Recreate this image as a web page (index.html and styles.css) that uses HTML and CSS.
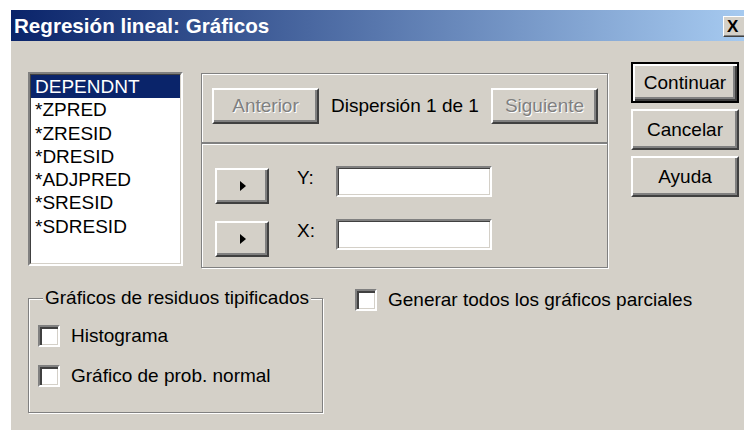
FILE: index.html
```html
<!DOCTYPE html>
<html lang="es">
<head>
<meta charset="utf-8">
<title>Regresión lineal: Gráficos</title>
<link rel="stylesheet" href="styles.css">
</head>
<body>
<div class="window">
  <div class="titlebar">
    <span class="title">Regresión lineal: Gráficos</span>
    <button class="close" type="button">X</button>
  </div>
  <div class="client">
    <div class="top-row">
      <div class="listbox">
        <div class="listbox-inner">
          <div class="item selected">DEPENDNT</div>
          <div class="item">*ZPRED</div>
          <div class="item">*ZRESID</div>
          <div class="item">*DRESID</div>
          <div class="item">*ADJPRED</div>
          <div class="item">*SRESID</div>
          <div class="item">*SDRESID</div>
        </div>
      </div>

      <div class="panel">
        <div class="panel-nav etched">
          <button class="btn nav-btn" type="button" disabled>Anterior</button>
          <span class="nav-status">Dispersión 1 de 1</span>
          <button class="btn nav-btn nav-next" type="button" disabled>Siguiente</button>
        </div>
        <div class="panel-vars etched">
          <div class="var-row">
            <button class="btn arrow" type="button"><span class="tri"></span></button>
            <span class="var-label">Y:</span>
            <div class="field"></div>
          </div>
          <div class="var-row">
            <button class="btn arrow" type="button"><span class="tri"></span></button>
            <span class="var-label">X:</span>
            <div class="field"></div>
          </div>
        </div>
      </div>

      <div class="actions">
        <button class="btn action default" type="button">Continuar</button>
        <button class="btn action" type="button">Cancelar</button>
        <button class="btn action" type="button">Ayuda</button>
      </div>
    </div>

    <div class="bottom-row">
      <div class="group etched">
        <span class="group-title">Gráficos de residuos tipificados</span>
        <div class="check-row first">
          <span class="checkbox"></span>
          <span class="check-label">Histograma</span>
        </div>
        <div class="check-row">
          <span class="checkbox"></span>
          <span class="check-label">Gráfico de prob. normal</span>
        </div>
      </div>
      <div class="check-row partial">
        <span class="checkbox"></span>
        <span class="check-label">Generar todos los gráficos parciales</span>
      </div>
    </div>
  </div>
</div>
</body>
</html>
```

FILE: styles.css
```css
html, body {
  margin: 0;
  padding: 0;
  overflow: hidden;
  background: #ffffff;
}

body {
  font-family: "Liberation Sans", Arial, sans-serif;
  font-size: 19px;
  color: #000;
}

.window {
  margin: 10px 0 0 11px;
  width: 733px;
  height: 420px;
  display: flex;
  flex-direction: column;
}

/* caption bar */
.titlebar {
  height: 31px;
  flex: none;
  display: flex;
  align-items: flex-start;
  background: linear-gradient(to right, #0a246a 0%, #a6caf0 100%);
}

.title {
  padding-left: 3px;
  line-height: 32px;
  font-weight: bold;
  font-size: 20.6px;
  color: #fff;
  white-space: nowrap;
}

.close {
  margin: 6px -3px 0 auto;
  width: 24px;
  height: 21px;
  box-sizing: border-box;
  padding: 0 0 0 3px;
  text-align: left;
  border: 1px solid;
  border-color: #fff #404040 #404040 #fff;
  box-shadow: inset -1px -1px #808080;
  background: #d4d0c8;
  font: bold 17px/17px "Liberation Sans", Arial, sans-serif;
  color: #000;
}

/* dialog body */
.client {
  flex: 1;
  background: #d4d0c8;
  display: flex;
  flex-direction: column;
}

.top-row {
  display: flex;
  align-items: flex-start;
  padding: 21px 0 0 17px;
}

/* classic raised button */
.btn {
  box-sizing: border-box;
  margin: 0;
  padding: 0;
  border: 2px solid;
  border-color: #fff #404040 #404040 #fff;
  box-shadow: inset -2px -2px #808080;
  background: #d4d0c8;
  font: 19px "Liberation Sans", Arial, sans-serif;
  color: #000;
  text-align: center;
}

.btn:disabled {
  color: #808080;
  text-shadow: 1px 1px #fff;
}

/* etched frame */
.etched {
  box-sizing: border-box;
  border: 1px solid #808080;
  box-shadow: inset 1px 1px #fff, 1px 1px #fff;
}

/* variable list */
.listbox {
  margin-top: 10px;
  width: 155px;
  height: 194px;
  box-sizing: border-box;
  border: 2px solid;
  border-color: #808080 #fff #fff #808080;
  background: #fff;
}

.listbox-inner {
  height: 100%;
  box-sizing: border-box;
  border: 1px solid;
  border-color: #404040 #d4d0c8 #d4d0c8 #404040;
}

.item {
  height: 23.3px;
  line-height: 23.3px;
  padding-left: 4px;
  white-space: nowrap;
}

.item.selected {
  background: #0a246a;
  color: #fff;
}

/* scatter definition panel */
.panel {
  margin: 11px 0 0 18px;
  width: 407px;
  height: 195px;
  display: flex;
  flex-direction: column;
}

.panel-nav {
  height: 70px;
  flex: none;
  display: flex;
  align-items: center;
  align-self: stretch;
  padding: 0 9px 4px 10px;
}

.nav-btn {
  width: 107px;
  height: 36px;
}

.nav-status {
  margin-left: 12px;
  white-space: nowrap;
}

.nav-next {
  margin-left: auto;
}

.panel-vars {
  flex: 1;
  padding: 22px 0 0 13px;
  display: flex;
  flex-direction: column;
  gap: 15px;
}

.var-row {
  display: flex;
  align-items: flex-start;
}

.arrow {
  margin-top: 2px;
  width: 54px;
  height: 36px;
  display: flex;
  align-items: center;
  justify-content: center;
}

.tri {
  width: 0;
  height: 0;
  border-left: 6px solid #000;
  border-top: 5px solid transparent;
  border-bottom: 5px solid transparent;
  margin-left: 2px;
}

.var-label {
  margin-left: 28px;
  width: 39px;
  line-height: 24px;
}

.field {
  width: 156px;
  height: 31px;
  box-sizing: border-box;
  border: 2px solid;
  border-color: #808080 #fff #fff #808080;
  box-shadow: inset 1px 1px #404040, inset -1px -1px #d4d0c8;
  background: #fff;
}

/* command buttons */
.actions {
  margin-left: 23px;
  display: flex;
  flex-direction: column;
  gap: 6px;
}

.action {
  width: 108px;
  height: 41px;
}

.action.default {
  border: 2px solid #000;
  box-shadow: inset 2px 2px #fff, inset -2px -2px #404040, inset -4px -4px #808080;
}

/* lower options */
.bottom-row {
  display: flex;
  align-items: flex-start;
  padding-left: 17px;
}

.group {
  margin-top: 30px;
  width: 295px;
  height: 115px;
  padding-left: 9px;
  display: flex;
  flex-direction: column;
  align-items: flex-start;
}

.group-title {
  margin: -12px 0 0 5px;
  padding: 0 2px;
  line-height: 22px;
  background: #d4d0c8;
  white-space: nowrap;
}

.check-row {
  display: flex;
  align-items: center;
  height: 22px;
  margin-top: 18px;
}

.check-row.first {
  margin-top: 16px;
}

.checkbox {
  width: 22px;
  height: 22px;
  flex: none;
  box-sizing: border-box;
  border: 2px solid;
  border-color: #808080 #fff #fff #808080;
  box-shadow: inset 2px 2px #404040, inset -1px -1px #d4d0c8;
  background: #fff;
}

.check-label {
  margin-left: 11px;
  line-height: 22px;
  white-space: nowrap;
}

.check-row.partial {
  margin: 21px 0 0 32px;
}
```
